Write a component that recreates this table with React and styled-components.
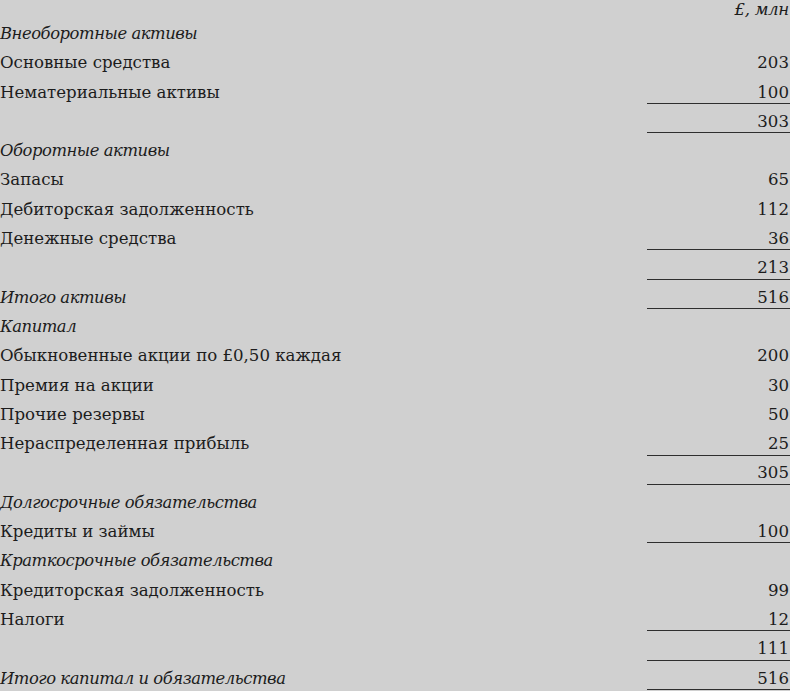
import React from "react";
import styled, { createGlobalStyle } from "styled-components";

const Global = createGlobalStyle`
  html, body { margin: 0; padding: 0; background: #d0d0d0; }
  body { font-family: "DejaVu Serif", "Liberation Serif", serif; color: #1c1c1c; }
`;

const Sheet = styled.div`
  width: 790px;
  display: flex;
  flex-direction: column;
`;

const Row = styled.div`
  display: grid;
  grid-template-columns: 1fr 143px;
  height: ${(p) => (p.$header ? "16.1px" : "29.3px")};
  align-items: end;
  font-size: 16.6px;
  line-height: ${(p) => (p.$header ? "13px" : "17px")};
`;

const Label = styled.div`
  font-style: ${(p) => (p.$italic ? "italic" : "normal")};
  font-size: ${(p) => (p.$italic ? "16.4px" : "16.6px")};
  letter-spacing: ${(p) => (p.$italic ? "-0.45px" : "0")};
  padding-bottom: 3.4px;
  white-space: nowrap;
`;

const Value = styled.div`
  text-align: right;
  padding-right: 1px;
  padding-bottom: ${(p) => (p.$header ? "0.6px" : p.$line ? "2.4px" : "3.4px")};
  font-style: ${(p) => (p.$header ? "italic" : "normal")};
  letter-spacing: ${(p) => (p.$header ? "-0.3px" : "0")};
  border-bottom: ${(p) => (p.$line ? "1px solid #2e2e2e" : "none")};
  height: 100%;
  box-sizing: border-box;
  display: flex;
  align-items: flex-end;
  justify-content: flex-end;
`;

const rows = [
  { label: "Внеоборотные активы", italic: true },
  { label: "Основные средства", value: "203" },
  { label: "Нематериальные активы", value: "100", line: true },
  { label: "", value: "303", line: true },
  { label: "Оборотные активы", italic: true },
  { label: "Запасы", value: "65" },
  { label: "Дебиторская задолженность", value: "112" },
  { label: "Денежные средства", value: "36", line: true },
  { label: "", value: "213", line: true },
  { label: "Итого активы", italic: true, value: "516", line: true },
  { label: "Капитал", italic: true },
  { label: "Обыкновенные акции по £0,50 каждая", value: "200" },
  { label: "Премия на акции", value: "30" },
  { label: "Прочие резервы", value: "50" },
  { label: "Нераспределенная прибыль", value: "25", line: true },
  { label: "", value: "305", line: true },
  { label: "Долгосрочные обязательства", italic: true },
  { label: "Кредиты и займы", value: "100", line: true },
  { label: "Краткосрочные обязательства", italic: true },
  { label: "Кредиторская задолженность", value: "99" },
  { label: "Налоги", value: "12", line: true },
  { label: "", value: "111", line: true },
  { label: "Итого капитал и обязательства", italic: true, value: "516", line: true },
];

export default function App() {
  return (
    <>
      <Global />
      <Sheet>
        <Row $header>
          <Label />
          <Value $header>£, млн</Value>
        </Row>
        {rows.map((r, i) => (
          <Row key={i}>
            <Label $italic={r.italic}>{r.label}</Label>
            <Value $line={r.line}>{r.value || ""}</Value>
          </Row>
        ))}
      </Sheet>
    </>
  );
}
